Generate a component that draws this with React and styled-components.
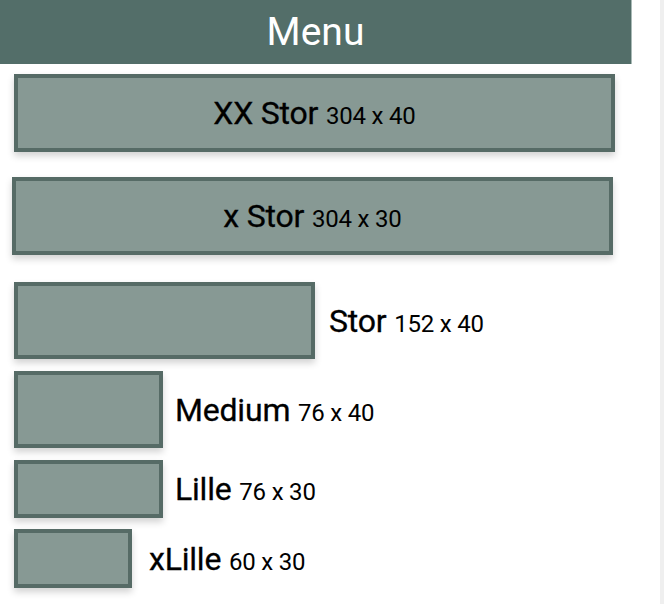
import React from "react";
import styled, { createGlobalStyle } from "styled-components";

const GlobalStyle = createGlobalStyle`
  html, body {
    margin: 0;
    padding: 0;
    background: #ffffff;
    font-family: Roboto, "Noto Sans", sans-serif;
  }
`;

const Screen = styled.div`
  display: flex;
  width: 664px;
  height: 604px;
  overflow: hidden;
`;

const Main = styled.div`
  width: 660px;
  display: flex;
  flex-direction: column;
`;

const Track = styled.div`
  width: 4px;
  background: #efefef;
`;

const Header = styled.div`
  width: 631px;
  height: 64px;
  background: #536e69;
  border-right: 1px solid #a9bab6;
  display: flex;
  align-items: center;
  justify-content: center;
  color: #ffffff;
  font-size: 39px;
  font-weight: 400;
`;

const List = styled.div`
  display: flex;
  flex-direction: column;
  padding: 10px 0 0 14px;
`;

const Row = styled.div`
  display: flex;
  align-items: center;
  gap: ${(p) => p.$gap}px;
  margin-top: ${(p) => p.$top}px;
  margin-left: ${(p) => p.$shift || 0}px;
`;

const Box = styled.div`
  box-sizing: border-box;
  width: ${(p) => p.$w}px;
  height: ${(p) => p.$h}px;
  background: #879994;
  border: 4px solid #566b66;
  box-shadow: 0 4px 7px rgba(0, 0, 0, 0.18);
  display: flex;
  align-items: center;
  justify-content: center;
`;

const Label = styled.span`
  color: #000000;
  font-size: 32px;
  font-weight: 400;
  letter-spacing: -0.2px;
  white-space: nowrap;
  -webkit-text-stroke: 0.3px #000000;
`;

const Size = styled.span`
  font-size: 24px;
  -webkit-text-stroke: 0;
`;

const items = [
  { name: "XX Stor", size: "304 x 40", w: 601, h: 78, inside: true, top: 0 },
  { name: "x Stor", size: "304 x 30", w: 601, h: 78, inside: true, top: 25, shift: -2 },
  { name: "Stor", size: "152 x 40", w: 301, h: 77, top: 27, gap: 14 },
  { name: "Medium", size: "76 x 40", w: 149, h: 77, top: 12, gap: 12 },
  { name: "Lille", size: "76 x 30", w: 149, h: 58, top: 12, gap: 12 },
  { name: "xLille", size: "60 x 30", w: 118, h: 59, top: 11, gap: 17 },
];

export default function App() {
  return (
    <>
      <GlobalStyle />
      <Screen>
        <Main>
          <Header>Menu</Header>
          <List>
            {items.map((it) => {
              const text = (
                <Label>
                  {it.name} <Size>{it.size}</Size>
                </Label>
              );
              return (
                <Row key={it.name} $top={it.top} $gap={it.gap || 0} $shift={it.shift}>
                  <Box $w={it.w} $h={it.h}>{it.inside && text}</Box>
                  {!it.inside && text}
                </Row>
              );
            })}
          </List>
        </Main>
        <Track />
      </Screen>
    </>
  );
}
